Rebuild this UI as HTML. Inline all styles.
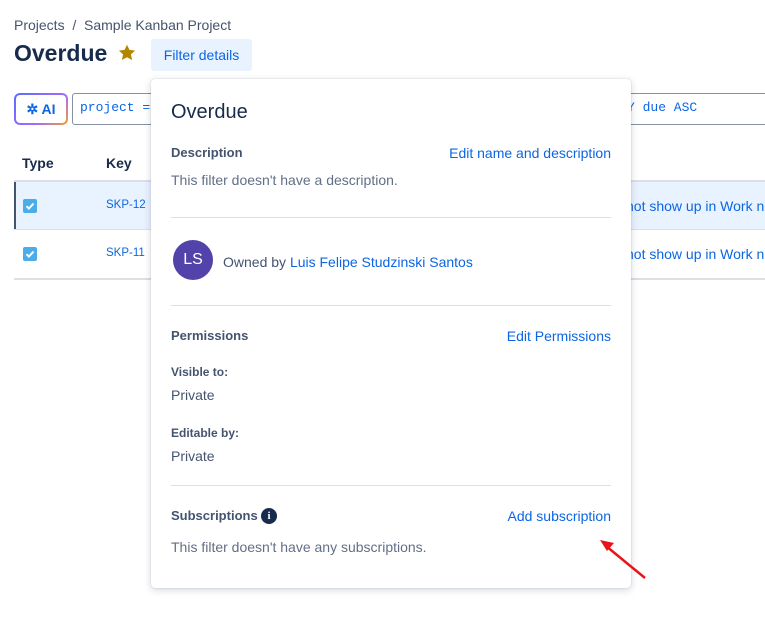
<!DOCTYPE html>
<html><head><meta charset="utf-8"><style>
*{margin:0;padding:0;box-sizing:border-box}
body{width:765px;height:621px;background:#fff;font-family:"Liberation Sans",sans-serif;color:#172b4d;position:relative;overflow:hidden;font-size:14px}
.a{position:absolute;white-space:nowrap}
.link{color:#0c66e4}
.muted{color:#626f86}
.lb{font-weight:bold;font-size:13px;color:#44546f}
</style></head><body>
<div class="a" style="left:14px;top:17px;color:#44546f;font-size:14px">Projects&nbsp;&nbsp;/&nbsp;&nbsp;Sample Kanban Project</div>
<div class="a" style="left:14px;top:40px;font-size:23px;font-weight:bold;color:#172b4d">Overdue</div>
<svg class="a" style="left:118px;top:44px" width="18" height="17" viewBox="0 0 24 23"><path d="M12 1l3.3 7 7.7.9-5.7 5.2 1.6 7.6L12 17.9l-6.9 3.8 1.6-7.6L1 8.9l7.7-.9z" fill="#b38600"/></svg>
<div class="a" style="left:151px;top:39px;width:101px;height:32px;background:#e9f2ff;border-radius:3px;color:#0c66e4;font-size:14px;text-align:center;line-height:32px">Filter details</div>

<div class="a" style="left:14px;top:93px;width:54px;height:32px;border-radius:6px;background:linear-gradient(135deg,#5b6cff,#9f6bff 60%,#f0a030);padding:2px"><div style="background:#fff;border-radius:4px;height:100%;color:#0c66e4;font-weight:bold;font-size:14px;line-height:28px;text-align:center">✲ AI</div></div>
<div class="a" style="left:72px;top:93px;width:700px;height:32px;border:1px solid #8590a2;border-radius:3px"></div>
<div class="a" style="left:80px;top:100px;font-family:'Liberation Mono',monospace;font-size:13px;color:#0c66e4">project =</div>
<div class="a" style="left:627px;top:100px;font-family:'Liberation Mono',monospace;font-size:13px;color:#0c66e4">Y due ASC</div>

<div class="a" style="left:22px;top:155px;font-weight:bold;font-size:14px">Type</div>
<div class="a" style="left:106px;top:155px;font-weight:bold;font-size:14px">Key</div>
<div class="a" style="left:14px;top:180px;width:751px;height:2px;background:#dcdfe4"></div>
<div class="a" style="left:14px;top:182px;width:751px;height:47px;background:#e9f2ff;border-left:2px solid #44546f"></div>
<div class="a" style="left:14px;top:229px;width:751px;height:1px;background:#dcdfe4"></div>
<div class="a" style="left:14px;top:278px;width:751px;height:2px;background:#dcdfe4"></div>
<svg class="a" style="left:23px;top:199px" width="14" height="14"><rect width="14" height="14" rx="2" fill="#4bade8"/><path d="M3.5 7.2l2.4 2.4 4.6-5" stroke="#fff" stroke-width="2" fill="none"/></svg>
<svg class="a" style="left:23px;top:247px" width="14" height="14"><rect width="14" height="14" rx="2" fill="#4bade8"/><path d="M3.5 7.2l2.4 2.4 4.6-5" stroke="#fff" stroke-width="2" fill="none"/></svg>
<div class="a link" style="left:106px;top:199px;font-size:11.5px">SKP-12</div>
<div class="a link" style="left:106px;top:247px;font-size:11.5px">SKP-11</div>
<div class="a link" style="left:626px;top:198px;font-size:14px">not show up in Work n</div>
<div class="a link" style="left:626px;top:246px;font-size:14px">not show up in Work n</div>

<div class="a" style="left:151px;top:79px;width:480px;height:509px;background:#fff;border-radius:4px;box-shadow:0 2px 8px rgba(9,30,66,.18),0 0 1px rgba(9,30,66,.3)"></div>
<div class="a" style="left:171px;top:101px;font-size:20px;color:#172b4d">Overdue</div>
<div class="a lb" style="left:171px;top:145px">Description</div>
<div class="a link" style="right:154px;top:145px;font-size:14px">Edit name and description</div>
<div class="a muted" style="left:171px;top:172px;font-size:14px">This filter doesn't have a description.</div>
<div class="a" style="left:171px;top:217px;width:440px;height:1px;background:#dcdfe4"></div>
<div class="a" style="left:173px;top:240px;width:40px;height:40px;border-radius:50%;background:#5243aa;color:#fff;font-size:16px;text-align:center;line-height:40px">LS</div>
<div class="a" style="left:223px;top:254px;font-size:14px;color:#44546f">Owned by <span class="link">Luis Felipe Studzinski Santos</span></div>
<div class="a" style="left:171px;top:305px;width:440px;height:1px;background:#dcdfe4"></div>
<div class="a lb" style="left:171px;top:328px">Permissions</div>
<div class="a link" style="right:154px;top:328px;font-size:14px">Edit Permissions</div>
<div class="a" style="left:171px;top:365px;font-weight:bold;font-size:12px;color:#44546f">Visible to:</div>
<div class="a" style="left:171px;top:387px;font-size:14px;color:#44546f">Private</div>
<div class="a" style="left:171px;top:426px;font-weight:bold;font-size:12px;color:#44546f">Editable by:</div>
<div class="a" style="left:171px;top:448px;font-size:14px;color:#44546f">Private</div>
<div class="a" style="left:171px;top:485px;width:440px;height:1px;background:#dcdfe4"></div>
<div class="a lb" style="left:171px;top:508px">Subscriptions</div>
<div class="a" style="left:261px;top:508px;width:16px;height:16px;border-radius:50%;background:#172b4d;color:#fff;font-size:11px;font-weight:bold;text-align:center;line-height:16px;font-family:'Liberation Serif',serif">i</div>
<div class="a link" style="right:154px;top:508px;font-size:14px">Add subscription</div>
<div class="a muted" style="left:171px;top:539px;font-size:14px">This filter doesn't have any subscriptions.</div>
<svg class="a" style="left:590px;top:530px" width="60" height="55"><line x1="55" y1="48" x2="16" y2="16" stroke="#e8141a" stroke-width="2.5"/><path d="M10 10l14 3-7 8z" fill="#e8141a"/></svg>
</body></html>
